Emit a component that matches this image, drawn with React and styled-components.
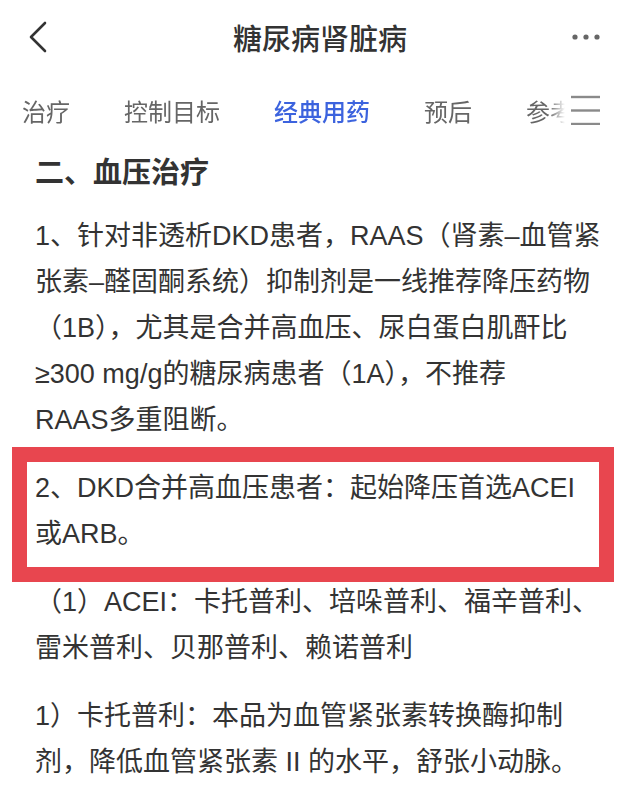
import React from 'react';
import styled, { createGlobalStyle } from 'styled-components';

const tabs = ['治疗', '控制目标', '经典用药', '预后', '参考文献'];

const App = () => {
    return (
        <Page>
            <GlobalStyle />
            <Header>
                <IconButton aria-label="返回">
                    <svg width="20" height="32" viewBox="0 0 20 32">
                        <polyline points="17,2 3,16 17,30" fill="none" stroke="#333" strokeWidth="2.6" strokeLinecap="round" strokeLinejoin="round" />
                    </svg>
                </IconButton>
                <Title>糖尿病肾脏病</Title>
                <MoreButton aria-label="更多">
                    <svg width="30" height="8" viewBox="0 0 30 8">
                        <circle cx="3" cy="4" r="2.6" fill="#666" />
                        <circle cx="14" cy="4" r="2.6" fill="#666" />
                        <circle cx="25" cy="4" r="2.6" fill="#666" />
                    </svg>
                </MoreButton>
            </Header>
            <TabBar>
                <TabScroller>
                    {tabs.map((t) => (
                        <Tab key={t} active={t === '经典用药'}>{t}</Tab>
                    ))}
                </TabScroller>
                <MenuButton aria-label="全部目录">
                    <svg width="30" height="30" viewBox="0 0 30 30">
                        <line x1="0" y1="2" x2="29" y2="2" stroke="#8a8a8a" strokeWidth="2.4" />
                        <line x1="0" y1="15.5" x2="29" y2="15.5" stroke="#8a8a8a" strokeWidth="2.4" />
                        <line x1="0" y1="29" x2="29" y2="29" stroke="#8a8a8a" strokeWidth="2.4" />
                    </svg>
                </MenuButton>
            </TabBar>
            <Content>
                <Heading>二、血压治疗</Heading>
                <Paragraph>
                    1、针对非透析DKD患者，RAAS（肾素–血管紧张素–醛固酮系统）抑制剂是一线推荐降压药物（1B），尤其是合并高血压、尿白蛋白肌酐比≥300 mg/g的糖尿病患者（1A），不推荐<br />RAAS多重阻断。
                </Paragraph>
                <Paragraph marked>
                    2、DKD合并高血压患者：起始降压首选ACEI<br />或ARB。
                </Paragraph>
                <Paragraph>
                    （1）ACEI：卡托普利、培哚普利、福辛普利、雷米普利、贝那普利、赖诺普利
                </Paragraph>
                <Paragraph>
                    1）卡托普利：本品为血管紧张素转换酶抑制剂，降低血管紧张素 II 的水平，舒张小动脉。
                </Paragraph>
            </Content>
        </Page>
    );
};

export default App;

const GlobalStyle = createGlobalStyle`
    html, body {
        margin: 0;
        padding: 0;
        background: #fff;
    }
    * {
        box-sizing: border-box;
    }
`;

const Page = styled.div`
    width: 640px;
    min-height: 792px;
    overflow: hidden;
    background: #fff;
    font-family: "Liberation Sans", "Noto Sans CJK SC", sans-serif;
    color: #333;
`;

const Header = styled.header`
    height: 74px;
    display: flex;
    align-items: center;
    justify-content: space-between;
    padding: 0 38px 0 28px;
    position: relative;
`;

const IconButton = styled.div`
    width: 20px;
    height: 32px;
    display: flex;
`;

const Title = styled.h1`
    position: absolute;
    left: 0;
    right: 0;
    top: 0;
    margin: 0;
    line-height: 74px;
    text-align: center;
    font-family: "Noto Sans CJK SC", sans-serif;
    font-size: 29px;
    font-weight: 500;
    color: #333;
    pointer-events: none;
`;

const MoreButton = styled.div`
    display: flex;
`;

const TabBar = styled.nav`
    height: 78px;
    display: flex;
`;

const TabScroller = styled.div`
    flex: 1;
    display: flex;
    gap: 54px;
    padding-left: 22px;
    overflow: hidden;
    white-space: nowrap;
    -webkit-mask-image: linear-gradient(to right, #000 0, #000 calc(100% - 16px), transparent 100%);
    mask-image: linear-gradient(to right, #000 0, #000 calc(100% - 16px), transparent 100%);
`;

const Tab = styled.div`
    position: relative;
    flex-shrink: 0;
    line-height: 74px;
    font-family: "Noto Sans CJK SC", sans-serif;
    font-size: 24px;
    font-weight: ${(p) => (p.active ? 500 : 400)};
    color: ${(p) => (p.active ? '#3c63de' : '#666')};

    &::after {
        content: '';
        display: ${(p) => (p.active ? 'block' : 'none')};
        position: absolute;
        left: 50%;
        bottom: -63px;
        width: 22px;
        height: 7px;
        margin-left: -11px;
        border-radius: 4px;
        background: #3c63de;
    }
`;

const MenuButton = styled.div`
    width: 75px;
    padding: 21px 0 0 6px;
    flex-shrink: 0;
`;

const Content = styled.main`
    padding: 0 37px 0 35px;
`;

const Heading = styled.h2`
    margin: 0 0 25px;
    line-height: 36px;
    font-family: "Noto Sans CJK SC", sans-serif;
    font-size: 29px;
    font-weight: 700;
    color: #333;
`;

const Paragraph = styled.p`
    position: relative;
    margin: 0 0 22px;
    font-size: 27px;
    line-height: 46px;
    color: #333;

    &::after {
        content: '';
        display: ${(p) => (p.marked ? 'block' : 'none')};
        position: absolute;
        top: -18px;
        bottom: -25px;
        left: -23px;
        right: -11px;
        border: 15px solid #e8464f;
        pointer-events: none;
    }
`;
